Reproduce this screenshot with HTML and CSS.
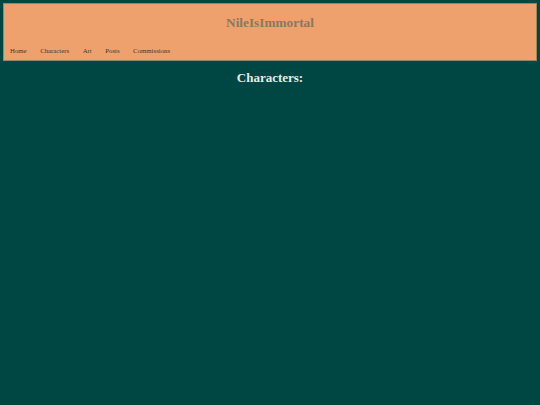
FILE: index.html
```html
<!DOCTYPE html>
<html>
<head>
<meta charset="utf-8">
<title>NileIsImmortal</title>
<link rel="stylesheet" href="styles.css">
</head>
<body>
<header class="site-header">
  <h1 class="site-title">NileIsImmortal</h1>
  <nav class="site-nav">
    <a href="#">Home</a>
    <a href="#">Characters</a>
    <a href="#">Art</a>
    <a href="#">Posts</a>
    <a href="#">Commissions</a>
  </nav>
</header>
<main class="content">
  <h2 class="page-title">Characters:</h2>
</main>
</body>
</html>
```

FILE: styles.css
```css
html, body {
  margin: 0;
  padding: 0;
}
body {
  background: #004643;
  font-family: "Liberation Serif", "Times New Roman", serif;
  padding: 3px;
  height: 405px;
  box-sizing: border-box;
}
.site-header {
  background: #efa16d;
  border: 1px solid #8f8a6c;
  height: 58px;
  box-sizing: border-box;
  display: flex;
  flex-direction: column;
}
.site-title {
  margin: 0;
  padding-top: 11px;
  text-align: center;
  font-size: 13.3px;
  line-height: 16px;
  font-weight: bold;
  color: #8a7760;
}
.site-nav {
  display: flex;
  gap: 13.5px;
  padding-left: 6px;
  margin-top: 16px;
  font-size: 6.8px;
  line-height: 8px;
}
.site-nav a {
  color: #3d3a2c;
  text-decoration: none;
}
.content {
  text-align: center;
}
.page-title {
  margin: 0;
  padding-top: 9px;
  font-size: 13px;
  line-height: 16px;
  font-weight: bold;
  color: #ebebe3;
}
```
